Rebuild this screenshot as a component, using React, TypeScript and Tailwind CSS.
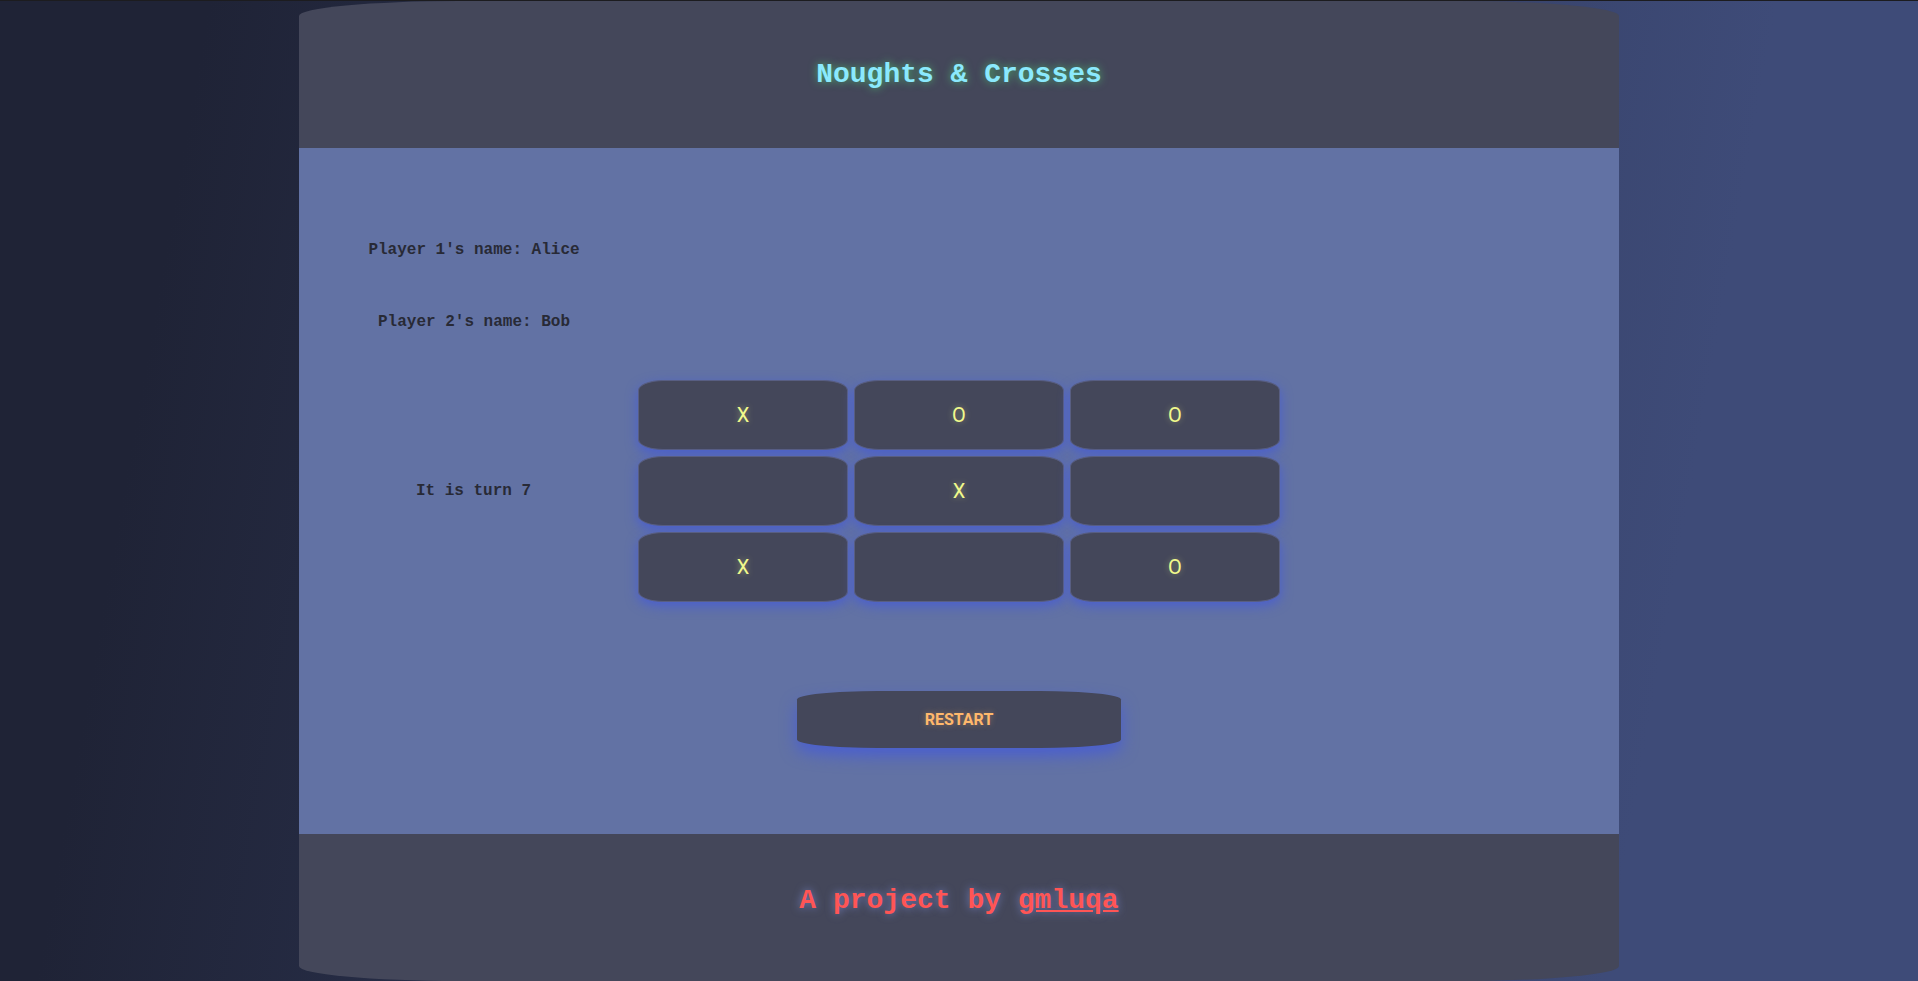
const board = ["X", "O", "O", "", "X", "", "X", "", "O"];

function Cell({ mark }: { mark: string }) {
  return (
    <button className="h-[70px] w-[210px] rounded-[12%/15%] border border-[#585e82] bg-[#44475a] text-[20px] text-[#f1fa8c] shadow-[0_4px_12px_#4a5fd0] [font-family:Roboto,'Noto_Sans',sans-serif] [text-shadow:0_0_6px_#f1fa8c66]">
      {mark}
    </button>
  );
}

export default function App() {
  return (
    <div className="min-h-screen border-t border-[#1c1c1f] bg-[linear-gradient(100deg,#1f2336_10%,#3e4b78_85%)] [font-family:'Liberation_Mono',monospace]">
      <div className="mx-auto flex w-[1320px] flex-col">
        <header className="flex h-[147px] items-center justify-center rounded-t-[160px_15px] bg-[#44475a]">
          <h1 className="text-[28px] font-bold text-[#8be9fd] [text-shadow:0_0_8px_#50fa7b99]">
            Noughts &amp; Crosses
          </h1>
        </header>

        <main className="flex h-[686px] flex-col bg-[#6272a4] pt-[90px] text-[#282a36]">
          <div className="w-[340px] pl-[10px] text-center">
            <p className="text-base leading-6 font-bold">Player 1's name: Alice</p>
            <p className="mt-[48px] text-base leading-6 font-bold">Player 2's name: Bob</p>
          </div>

          <div className="mt-[46px] grid grid-cols-[339px_642px_1fr] items-center">
            <p className="pl-[10px] text-center text-base leading-6 font-bold">It is turn 7</p>
            <div className="grid grid-cols-3 gap-[6px]">
              {board.map((m, i) => (
                <Cell key={i} mark={m} />
              ))}
            </div>
            <div />
          </div>

          <div className="mt-[89px] flex justify-center">
            <button className="h-[57px] w-[324px] rounded-[25%/15%] bg-[#44475a] text-base font-bold text-[#ffb86c] shadow-[0_8px_16px_#4a5fd0] [font-family:Roboto,'Noto_Sans',sans-serif] [text-shadow:0_0_6px_#ffb86c66]">
              RESTART
            </button>
          </div>
        </main>

        <footer className="flex h-[147px] items-center justify-center rounded-b-[160px_15px] bg-[#44475a] pb-[14px]">
          <p className="text-[28px] font-bold text-[#ff5555] [text-shadow:0_0_8px_#8b9cf0aa]">
            A project by{" "}
            <a href="#" className="underline">
              gmluqa
            </a>
          </p>
        </footer>
      </div>
    </div>
  );
}
